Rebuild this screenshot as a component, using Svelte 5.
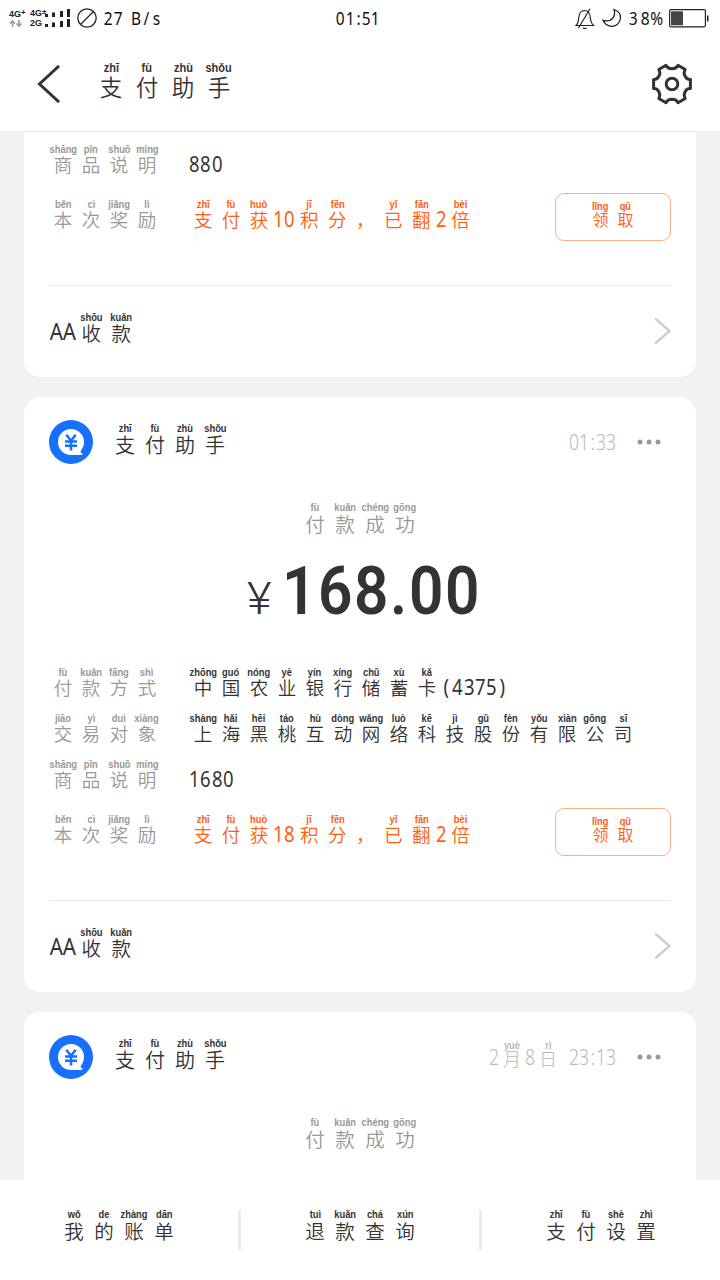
<script>
  const parse = (s) =>
    s.split(' ').flatMap((t) => {
      if (t.includes('|')) {
        const [c, p] = t.split('|');
        return [{ c, p }];
      }
      return [...t].map((c) => ({ c: c === '_' ? '\u00a0' : c, p: null }));
    });

  const name = '支|zhī 付|fù 助|zhù 手|shǒu';
  const paid = '付|fù 款|kuǎn 成|chéng 功|gōng';
  const split = 'AA 收|shōu 款|kuǎn';
  const note = '商|shāng 品|pǐn 说|shuō 明|míng';
  const reward = '本|běn 次|cì 奖|jiǎng 励|lì';
  const points = (n) => `支|zhī 付|fù 获|huò ${n} 积|jī 分|fēn ，| 已|yǐ 翻|fān 2 倍|bèi`;
  const details = [
    ['付|fù 款|kuǎn 方|fāng 式|shì', '中|zhōng 国|guó 农|nóng 业|yè 银|yín 行|xíng 储|chǔ 蓄|xù 卡|kǎ (4375)'],
    [
      '交|jiāo 易|yì 对|duì 象|xiàng',
      '上|shàng 海|hǎi 黑|hēi 桃|táo 互|hù 动|dòng 网|wǎng 络|luò 科|kē 技|jì 股|gǔ 份|fèn 有|yǒu 限|xiàn 公|gōng 司|sī'
    ],
    [note, '1680']
  ];
  const tabs = [
    '我|wǒ 的|de 账|zhàng 单|dān',
    '退|tuì 款|kuǎn 查|chá 询|xún',
    '支|zhī 付|fù 设|shè 置|zhì'
  ];
</script>

{#snippet py(text, cls)}
  <span class="py {cls}">
    {#each parse(text) as ch}
      {#if ch.p === null}
        <span class="cell latin" class:narrow={ch.c === ':' || ch.c === '\u00a0'}><i></i><b>{ch.c}</b></span>
      {:else}
        <span class="cell"><i>{ch.p}</i><b>{ch.c}</b></span>
      {/if}
    {/each}
  </span>
{/snippet}

{#snippet head(time)}
  <div class="head">
    <svg class="logo" viewBox="0 0 44 44">
      <circle cx="22" cy="22" r="22" fill="#1770fb" />
      <circle cx="22" cy="22" r="13" fill="#fff" />
      <path d="M22 35c4 .2 8 .2 11.300-.3v-1.600c-1.500 0-2-.8-1.500-2.100l1-3-8 3z" fill="#fff" />
      <path d="M17.300 14.800l4.700 6 4.700-6M16 21.500h12M16 25.800h12M22 20.500v10" fill="none" stroke="#1770fb" stroke-width="2.500" />
    </svg>
    {@render py(name, 'title')}
    {@render py(time, 'time')}
    <svg class="dots" viewBox="0 0 24 6"><circle cx="3" cy="3" r="2.500" /><circle cx="12" cy="3" r="2.500" /><circle cx="21" cy="3" r="2.500" /></svg>
  </div>
{/snippet}

{#snippet rewardRow(n)}
  <div class="row reward">
    {@render py(reward, 'label')}
    {@render py(points(n), 'orange')}
    <button>{@render py('领|lǐng 取|qǔ', 'claim')}</button>
  </div>
{/snippet}

{#snippet link()}
  <div class="link">
    {@render py(split, 'dark')}
    <svg viewBox="0 0 16 26"><path d="M0 .5L14.500 13 0 25.500" fill="none" stroke="#ccc" stroke-width="2.400" /></svg>
  </div>
{/snippet}

<div class="screen">
  <div class="status">
    <div class="sim one"><span>4G<sup>+</sup></span>
      <svg viewBox="0 0 14 7"><path d="M3.500 7V1.500M1 3.500L3.500 1 6 3.500M10 0v5.500M7.500 3.500L10 6l2.500-2.500" fill="none" stroke="#999" stroke-width="1.600" /></svg>
    </div>
    <div class="sim two"><span>4G<sup>±</sup></span><span>2G</span></div>
    <svg class="bars" viewBox="0 0 26 20" fill="#222">
      <path d="M0 5h3v3H0zM7 3.500h3V8H7zM15 2h3v6h-3zM22 0h3v8h-3zM0 15h3v3H0zM7 13.500h3V18H7zM15 12h3v6h-3zM22 10h3v8h-3z" />
    </svg>
    <svg class="ban" viewBox="0 0 20 20" fill="none" stroke="#222" stroke-width="1.300"><circle cx="10" cy="10" r="9.200" /><path d="M3.500 16.500l13-13" /></svg>
    {@render py('27_B/s', 'speed')}
    {@render py('01:51', 'clock')}
    <svg class="bell" viewBox="0 0 20 21" fill="none" stroke="#222" stroke-width="1.200">
      <path d="M1 17.500c2-2 2.500-4 2.800-8C4.200 5 6.500 2.500 9.500 2.500S15 5 15.300 9.500c.3 4 1 6 3.200 8zM3.500 20L15 .8M8 20c1 .7 2.500.7 3.500 0" />
    </svg>
    <svg class="moon" viewBox="0 0 20 20" fill="none" stroke="#222" stroke-width="1.300"><path d="M12 1.500c4.500 1.500 7 5 6.300 9.500-.7 4.500-4.500 7.500-9 7.300C5 18 2.300 15.500 1 12.300c4 1 8 .2 10-2.500 1.700-2.300 2-5.300 1-8.300z" /></svg>
    {@render py('38%', 'pct')}
    <svg class="battery" viewBox="0 0 40 19"><rect x=".6" y=".6" width="35.800" height="17.300" rx="1.500" fill="none" stroke="#222" stroke-width="1.200" /><path d="M2 2.300h12v14H2z" fill="#444" /><path d="M38 6.500h1.500v6H38z" fill="#222" /></svg>
  </div>

  <header>
    <svg class="back" viewBox="0 0 24 38"><path d="M22 1L2.500 19 22 37" fill="none" stroke="#333" stroke-width="3" /></svg>
    {@render py(name, 'big')}
    <svg class="gear" viewBox="0 0 42 42" fill="none" stroke="#333" stroke-width="3">
      <path d="M15 2.300C17 6.800 25 6.800 27 2.300L34.200 6.500C31.400 10.800 35 17 39.400 16.500V25.500C35 25 31.400 31.200 34.200 35.500L27 39.700C25 35.200 17 35.200 15 39.700L7.800 35.500C10.600 31.200 7 25 2.600 25.500V16.500C7 17 10.600 10.800 7.800 6.500Z" stroke-linejoin="round" />
      <circle cx="21" cy="21" r="5.800" />
    </svg>
  </header>

  <main>
    <section class="card first">
      <div class="row">{@render py(note, 'label')}{@render py('880', 'value')}</div>
      {@render rewardRow('10')}
      {@render link()}
    </section>

    <section class="card">
      {@render head('01:33')}
      <div class="paid">{@render py(paid, 'grey')}</div>
      <div class="amount">
        <span class="yen">¥</span>
        {#each '168.00' as d}<span class="digit" class:dot={d === '.'}><b>{d}</b></span>{/each}
      </div>
      {#each details as [l, v]}
        <div class="row">{@render py(l, 'label')}{@render py(v, 'value')}</div>
      {/each}
      {@render rewardRow('18')}
      {@render link()}
    </section>

    <section class="card last">
      {@render head('2 月|yuè 8 日|rì _23:13')}
      <div class="paid">{@render py(paid, 'grey')}</div>
    </section>
  </main>

  <footer>
    {#each tabs as t}<div class="tab">{@render py(t, 'dark')}</div>{/each}
  </footer>
</div>

<style>
  :global(body) { background: #f2f2f2; }
  .screen {
    width: 720px; height: 1280px; overflow: hidden; display: flex; flex-direction: column;
    background: #f2f2f2; color: #333;
    font-family: 'Noto Sans', 'Noto Sans CJK SC', sans-serif;
  }
  svg { display: block; flex: none; }

  .py {
    --w: 28px; --d: 11.2px; --f: 18.5px; --lf: 22px; --p: 10.4px; --h: 22px;
    --up: -3px; --lup: -4.5px; --sx: 0.84;
    display: inline-flex; flex: none;
  }
  .cell { width: var(--w); display: flex; flex-direction: column; align-items: center; white-space: nowrap; }
  .cell i {
    height: 11px; font: bold var(--p) / 11px 'Liberation Sans', sans-serif;
    display: block; transform: translateY(-0.8px) scaleX(0.9);
  }
  .cell b {
    display: block; height: var(--h); line-height: var(--h); font-size: var(--f);
    font-weight: 350; font-family: 'Noto Sans CJK SC', sans-serif; transform: translateY(var(--up));
  }
  .latin { width: var(--d); }
  .latin b {
    font-size: var(--lf); transform: translateY(var(--lup)) scaleX(var(--sx));
    font-family: 'Noto Sans', sans-serif; font-weight: 400;
  }
  .latin.narrow { width: calc(var(--d) * 0.75); }

  .label, .grey { color: #999; }
  .label { width: 140px; }
  .orange { color: #ff6010; }
  .title, .dark, .grey { --w: 30px; --f: 19.5px; --h: 23px; --up: -3px; }
  .dark { --d: 13.2px; --sx: 0.9; --lf: 23px; --lup: -4px; }
  .title { --f: 20px; --h: 24px; --up: -2.5px; }
  .grey { --up: -2.5px; }
  .time { --w: 26px; --d: 10px; --up: -5px; --lup: -6px; --f: 18px; --lf: 21px; color: #b8b8b8; margin: 0 0 0 auto; }
  .time b { font-weight: 300; }
  .claim { --w: 25px; --f: 16px; --h: 19px; --up: -3px; }
  .big { --w: 36px; --f: 22.5px; --p: 12.2px; --h: 27px; --up: -2px; }
  .speed, .clock, .pct { --lf: 18.500px; --d: 10px; --h: 20px; --lup: 0px; color: #111; }
  .speed i, .clock i, .pct i { display: none; }

  .status { height: 36px; display: flex; align-items: center; background: #fff; position: relative; flex: none; }
  .sim { font: bold 9px/10px 'Liberation Sans', sans-serif; color: #222; display: flex; flex-direction: column; }
  .sim sup { font-size: 8px; line-height: 0; vertical-align: 2px; }
  .one { margin-left: 9px; width: 21px; }
  .one svg { width: 14px; height: 7px; margin-top: 1px; }
  .two { width: 15px; white-space: nowrap; }
  .bars { width: 26px; height: 20px; margin-top: 2px; }
  .ban { width: 20px; height: 20px; margin-left: 6px; }
  .speed { margin-left: 6px; }
  .speed .narrow { width: 8.500px; }
  .clock { position: absolute; left: 336px; top: 8px; --d: 9.300px; }
  .bell { width: 20px; height: 21px; margin-left: auto; }
  .moon { width: 20px; height: 20px; margin-left: 7px; }
  .pct { margin-left: 6px; --d: 11.400px; }
  .battery { width: 40px; height: 19px; margin: 0 11px 0 7px; }

  header {
    height: 95px; flex: none; display: flex; align-items: center; background: #fff;
    border-bottom: 1px solid #ebebeb;
  }
  .back { width: 24px; height: 38px; margin-left: 37px; }
  .big { margin: -1px 0 0 32px; }
  .gear { width: 42px; height: 42px; margin: 0 27px 0 auto; }

  main { flex: 1; min-height: 0; overflow: hidden; padding: 0 24px; display: flex; flex-direction: column; gap: 20px; }
  .card { background: #fff; border-radius: 16px; padding: 23px 25px 0; flex: none; }
  .first { padding-top: 13px; border-radius: 0 0 16px 16px; }
  .last { height: 180px; }
  .head { height: 44px; display: flex; align-items: center; }
  .logo { width: 44px; height: 44px; }
  .title { margin: -2px 0 0 17px; }
  .dots { width: 24px; height: 6px; fill: #999; margin: 0 10px 0 21px; }
  .paid { height: 94px; padding-top: 39px; box-sizing: border-box; display: flex; justify-content: center; }
  .amount { height: 110px; display: flex; padding-left: 198px; line-height: 66px; font-family: Roboto, sans-serif; }
  .yen { width: 34px; font-size: 44px; line-height: 82px; height: 66px; font-weight: 300; transform: scaleX(1.08); transform-origin: left; }
  .digit { width: 36px; font-size: 67px; display: flex; justify-content: center; }
  .digit b { font-weight: 600; transform: scaleX(0.9); }
  .digit.dot { width: 19px; }
  .row { height: 46px; display: flex; align-items: flex-start; }
  .reward { height: 95px; padding-top: 9px; box-sizing: border-box; border-bottom: 1px solid #ebebeb; }
  button {
    width: 116px; height: 48px; margin: -7px 0 0 auto; padding: 0; border: 1px solid #ffad85; border-radius: 9px;
    background: #fff; color: #ff6010; display: flex; align-items: center; justify-content: center;
  }
  .link { height: 91px; display: flex; align-items: center; justify-content: space-between; }
  .link .dark { margin: -3px 0 0 1px; }
  .link svg { width: 16px; height: 26px; margin-top: -2px; }

  footer { height: 100px; flex: none; background: #fff; display: flex; align-items: center; }
  .tab { flex: 1; height: 40px; display: flex; justify-content: center; }
  .tab + .tab { border-left: 3px solid #ebebeb; }
  .tab .dark { --up: -2.5px; }
</style>
